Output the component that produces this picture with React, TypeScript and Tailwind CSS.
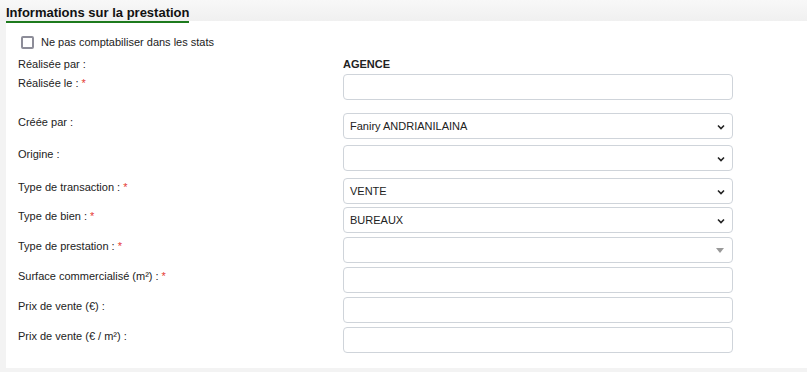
import React from 'react';

type Row = {
  label: string;
  required?: boolean;
  kind: 'input' | 'select' | 'select2';
  value?: string;
  mt: string;
};

const rows: Row[] = [
  { label: 'Réalisée le :', required: true, kind: 'input', mt: 'mt-[3px]' },
  { label: 'Créée par :', kind: 'select', value: 'Faniry ANDRIANILAINA', mt: 'mt-[13px]' },
  { label: 'Origine :', kind: 'select', mt: 'mt-[6px]' },
  { label: 'Type de transaction :', required: true, kind: 'select', value: 'VENTE', mt: 'mt-[7px]' },
  { label: 'Type de bien :', required: true, kind: 'select', value: 'BUREAUX', mt: 'mt-[3px]' },
  { label: 'Type de prestation :', required: true, kind: 'select2', mt: 'mt-[4px]' },
  { label: 'Surface commercialisé (m²) :', required: true, kind: 'input', mt: 'mt-[4px]' },
  { label: 'Prix de vente (€) :', kind: 'input', mt: 'mt-[4px]' },
  { label: 'Prix de vente (€ / m²) :', kind: 'input', mt: 'mt-[4px]' },
];

const Chevron = () => (
  <svg width="8" height="6" viewBox="0 0 8 6" className="absolute right-[7px] top-[10px]">
    <path d="M1 1.5 L4 4.5 L7 1.5" fill="none" stroke="#222" strokeWidth="1.6" />
  </svg>
);

const Triangle = () => (
  <svg width="8" height="5" viewBox="0 0 8 5" className="absolute right-[8px] top-[10px]">
    <path d="M0 0 L8 0 L4 5 Z" fill="#999" />
  </svg>
);

const Field: React.FC<{ row: Row }> = ({ row }) => (
  <div className="relative w-[390px] h-[26px] border border-[#cfd4da] rounded-[4px] bg-white flex items-center pl-[6px] text-[11px] text-[#222]">
    {row.value}
    {row.kind === 'select' && <Chevron />}
    {row.kind === 'select2' && <Triangle />}
  </div>
);

const App: React.FC = () => {
  return (
    <div className="w-[807px] h-[372px] bg-[#f3f3f3] overflow-hidden" style={{ fontFamily: '"Liberation Sans", Arial, sans-serif' }}>
      <div className="h-[21px] px-[6px] bg-gradient-to-b from-[#f8f8f8] to-[#f0f0f0]">
        <span className="inline-block h-[21px] pt-[3px] border-b-2 border-[#1d7a1d] text-[13px] leading-[15px] font-bold text-[#111]">
          Informations sur la prestation
        </span>
      </div>

      <div className="ml-[6px] h-[347px] bg-white pl-[12px] pt-[14px] text-[11px] leading-[14px] text-[#222]">
        <div className="flex items-center h-[14px] pl-[3px]">
          <span className="w-[13px] h-[13px] border-2 border-[#8d8d99] rounded-[2px] bg-white" />
          <span className="ml-[7px]">Ne pas comptabiliser dans les stats</span>
        </div>

        <div className="flex mt-[8px]">
          <div className="w-[325px]">Réalisée par :</div>
          <div className="font-bold">AGENCE</div>
        </div>

        {rows.map((row) => (
          <div key={row.label} className={`flex ${row.mt}`}>
            <div className="w-[325px] pt-[2px]">
              {row.label}
              {row.required && <span className="text-[#e53935] ml-[3px]">*</span>}
            </div>
            <Field row={row} />
          </div>
        ))}
      </div>
    </div>
  );
};

export default App;
